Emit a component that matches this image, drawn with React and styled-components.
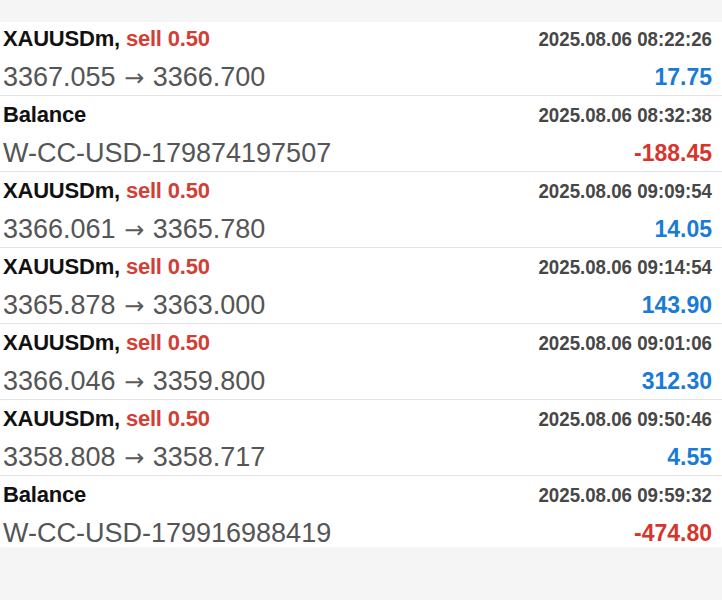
import React from 'react';
import styled, {createGlobalStyle} from 'styled-components';

const GlobalStyle = createGlobalStyle`
  body {
    margin: 0;
    background: #f5f5f5;
    font-family: "Liberation Sans", Arial, sans-serif;
  }
`;

const List = styled.div`
  margin-top: 22px;
  background: #fff;
  height: 525px;
  overflow: hidden;
`;

const Row = styled.div`
  display: grid;
  grid-template-columns: 1fr auto;
  height: 76px;
  box-sizing: border-box;
  padding: 5px 10px 0 3px;
  border-bottom: 1px solid #e3e3e3;

  &:first-child {
    height: 74px;
    padding-top: 3px;
  }

  &:last-child {
    border-bottom: 0;
  }
`;

const Title = styled.div`
  font-size: 22px;
  line-height: 28px;
  font-weight: 700;
  color: #111;
  letter-spacing: -0.2px;
`;

const Side = styled.span`
  color: #d23f36;
`;

const Detail = styled.div`
  margin-top: 6px;
  font-size: 27px;
  line-height: 36px;
  color: #555;
`;

const Arrow = styled.span`
  font-family: "DejaVu Sans", sans-serif;
  font-size: 24px;
  color: #5a5a5a;
  margin: 0 1px;
`;

const Time = styled.div`
  font-size: 21px;
  line-height: 28px;
  font-weight: 700;
  color: #474747;
  text-align: right;
  transform: scaleX(0.89);
  transform-origin: right center;
  white-space: nowrap;
`;

const Amount = styled.div`
  margin-top: 6px;
  font-size: 23px;
  line-height: 36px;
  font-weight: 700;
  text-align: right;
  color: ${props => (props.negative ? '#d7352c' : '#1a7bd6')};
`;

const deals = [
  {symbol: 'XAUUSDm', side: 'sell 0.50', time: '2025.08.06 08:22:26', from: '3367.055', to: '3366.700', amount: '17.75'},
  {symbol: 'Balance', time: '2025.08.06 08:32:38', detail: 'W-CC-USD-179874197507', amount: '-188.45'},
  {symbol: 'XAUUSDm', side: 'sell 0.50', time: '2025.08.06 09:09:54', from: '3366.061', to: '3365.780', amount: '14.05'},
  {symbol: 'XAUUSDm', side: 'sell 0.50', time: '2025.08.06 09:14:54', from: '3365.878', to: '3363.000', amount: '143.90'},
  {symbol: 'XAUUSDm', side: 'sell 0.50', time: '2025.08.06 09:01:06', from: '3366.046', to: '3359.800', amount: '312.30'},
  {symbol: 'XAUUSDm', side: 'sell 0.50', time: '2025.08.06 09:50:46', from: '3358.808', to: '3358.717', amount: '4.55'},
  {symbol: 'Balance', time: '2025.08.06 09:59:32', detail: 'W-CC-USD-179916988419', amount: '-474.80'}
];

const App = () => {
  return (
    <>
      <GlobalStyle/>
      <List>
        {deals.map((deal, i) => (
          <Row key={i}>
            <div>
              <Title>
                {deal.side ? <>{deal.symbol}, <Side>{deal.side}</Side></> : deal.symbol}
              </Title>
              <Detail>
                {deal.detail || <>{deal.from} <Arrow>→</Arrow> {deal.to}</>}
              </Detail>
            </div>
            <div>
              <Time>{deal.time}</Time>
              <Amount negative={deal.amount.startsWith('-')}>{deal.amount}</Amount>
            </div>
          </Row>
        ))}
      </List>
    </>
  );
};

export default App;
